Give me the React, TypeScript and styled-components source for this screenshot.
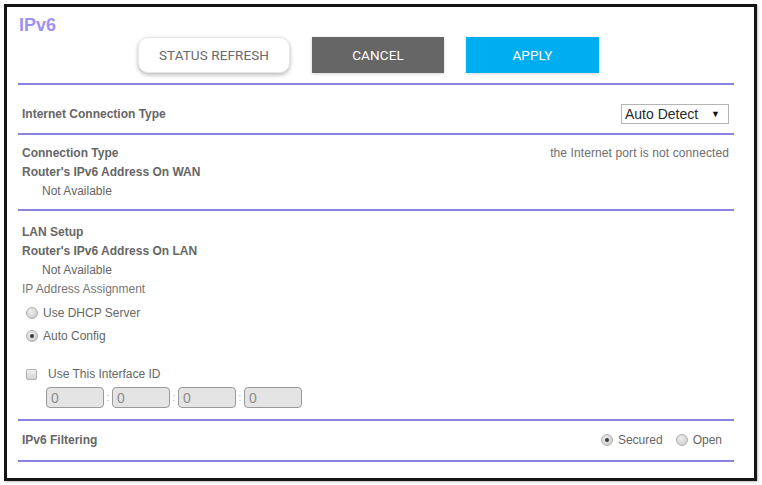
import React from "react";
import styled, { createGlobalStyle } from "styled-components";

const GlobalStyle = createGlobalStyle`
  html, body {
    margin: 0;
    padding: 0;
    background: #ffffff;
  }
  body {
    font-family: "Liberation Sans", Arial, sans-serif;
  }
`;

const Page = styled.div`
  padding: 4px;
  width: 762px;
  height: 485px;
  box-sizing: border-box;
`;

const Frame = styled.div`
  width: 753px;
  height: 477px;
  box-sizing: border-box;
  border: 3px solid #151515;
  padding: 8px 20px 0 11px;
  box-shadow: 1px 1px 2px rgba(0, 0, 0, 0.25);
`;

const Title = styled.div`
  margin-left: 1px;
  font-size: 18px;
  line-height: 20px;
  font-weight: bold;
  color: #9f92ee;
`;

const ButtonRow = styled.div`
  display: flex;
  gap: 22px;
  margin: 2px 0 0 120px;
`;

const Button = styled.div<{ $variant: "plain" | "dark" | "blue"; $width: number }>`
  width: ${(p) => p.$width}px;
  height: 36px;
  display: flex;
  align-items: center;
  justify-content: center;
  font-family: Roboto, "Liberation Sans", sans-serif;
  font-size: 13.5px;
  letter-spacing: 0.1px;
  box-sizing: border-box;
  background: ${(p) =>
    p.$variant === "plain" ? "#ffffff" : p.$variant === "dark" ? "#666666" : "#00adef"};
  color: ${(p) => (p.$variant === "plain" ? "#6a6a6a" : "#ffffff")};
  border-radius: ${(p) => (p.$variant === "plain" ? "10px" : "0")};
  border: ${(p) => (p.$variant === "plain" ? "1px solid #e6e6e6" : "none")};
  box-shadow: ${(p) =>
    p.$variant === "plain"
      ? "0 2px 4px rgba(0, 0, 0, 0.28)"
      : "0 1px 3px rgba(0, 0, 0, 0.18)"};
`;

const Section = styled.div<{ $top: number; $bottom: number }>`
  padding: ${(p) => p.$top}px 0 ${(p) => p.$bottom}px 4px;
  border-bottom: 2px solid #8a82e2;
`;

const HeaderRule = styled.div`
  margin-top: 10px;
  border-bottom: 2px solid #8a82e2;
`;

const Row = styled.div<{ $height?: number }>`
  display: flex;
  align-items: center;
  justify-content: space-between;
  height: ${(p) => p.$height ?? 19}px;
  font-size: 12px;
  color: #666666;
`;

const Label = styled.span<{ $bold?: boolean; $indent?: number; $light?: boolean }>`
  font-weight: ${(p) => (p.$bold ? "bold" : "normal")};
  padding-left: ${(p) => p.$indent ?? 0}px;
  color: ${(p) => (p.$light ? "#777777" : "#666666")};
`;

const Note = styled.span`
  margin-right: 5px;
  color: #6e6e6e;
  letter-spacing: 0.1px;
`;

const Select = styled.div`
  width: 108px;
  height: 20px;
  box-sizing: border-box;
  margin-right: 5px;
  border: 1px solid #b4b4b4;
  background: #ffffff;
  display: flex;
  align-items: center;
  justify-content: space-between;
  padding: 0 8px 0 3px;
  font-size: 14px;
  color: #2a2a2a;
`;

const Arrow = styled.span`
  font-size: 9px;
  color: #111;
`;

const Choice = styled.label<{ $indent?: number }>`
  display: flex;
  align-items: center;
  gap: 5px;
  padding-left: ${(p) => p.$indent ?? 0}px;
  color: #666666;
`;

const Radio = styled.span<{ $on?: boolean }>`
  position: relative;
  width: 10px;
  height: 10px;
  border-radius: 50%;
  border: 1px solid #b0b0b0;
  background: radial-gradient(circle at 40% 35%, #eeeeee, #c6c6c6);
  box-sizing: content-box;
  &::after {
    content: "";
    display: ${(p) => (p.$on ? "block" : "none")};
    position: absolute;
    left: 3px;
    top: 3px;
    width: 4px;
    height: 4px;
    border-radius: 50%;
    background: #3a3a3a;
  }
`;

const Box = styled.span`
  width: 9px;
  height: 9px;
  border: 1px solid #b0b0b0;
  border-radius: 2px;
  background: linear-gradient(#f2f2f2, #d2d2d2);
  margin-right: 6px;
`;

const FieldRow = styled.div`
  display: flex;
  align-items: center;
  margin-top: 3px;
  padding-left: 24px;
`;

const Field = styled.div`
  width: 58px;
  height: 21px;
  box-sizing: border-box;
  border: 1px solid #9a9a9a;
  border-radius: 4px;
  background: #e4e4e4;
  color: #8c8c8c;
  font-size: 14px;
  display: flex;
  align-items: center;
  padding-left: 4px;
`;

const Colon = styled.span`
  width: 8px;
  text-align: center;
  font-size: 10px;
  color: #aaaaaa;
`;

const FilterChoices = styled.div`
  display: flex;
  gap: 13px;
  margin-right: 12px;
`;

export default function App() {
  return (
    <>
      <GlobalStyle />
      <Page>
        <Frame>
          <Title>IPv6</Title>
          <ButtonRow>
            <Button $variant="plain" $width={152}>STATUS REFRESH</Button>
            <Button $variant="dark" $width={132}>CANCEL</Button>
            <Button $variant="blue" $width={133}>APPLY</Button>
          </ButtonRow>
          <HeaderRule />

          <Section $top={19} $bottom={9}>
            <Row $height={20}>
              <Label $bold>Internet Connection Type</Label>
              <Select>
                Auto Detect <Arrow>▼</Arrow>
              </Select>
            </Row>
          </Section>

          <Section $top={8} $bottom={9}>
            <Row>
              <Label $bold>Connection Type</Label>
              <Note>the Internet port is not connected</Note>
            </Row>
            <Row>
              <Label $bold>Router's IPv6 Address On WAN</Label>
            </Row>
            <Row>
              <Label $indent={20}>Not Available</Label>
            </Row>
          </Section>

          <Section $top={11} $bottom={11}>
            <Row>
              <Label $bold>LAN Setup</Label>
            </Row>
            <Row>
              <Label $bold>Router's IPv6 Address On LAN</Label>
            </Row>
            <Row>
              <Label $indent={20}>Not Available</Label>
            </Row>
            <Row>
              <Label $light>IP Address Assignment</Label>
            </Row>
            <Row $height={23} style={{ marginTop: 3 }}>
              <Choice $indent={4}>
                <Radio />
                Use DHCP Server
              </Choice>
            </Row>
            <Row $height={23}>
              <Choice $indent={4}>
                <Radio $on />
                Auto Config
              </Choice>
            </Row>
            <Row $height={20} style={{ marginTop: 17 }}>
              <Choice $indent={4}>
                <Box />
                Use This Interface ID
              </Choice>
            </Row>
            <FieldRow>
              <Field>0</Field>
              <Colon>:</Colon>
              <Field>0</Field>
              <Colon>:</Colon>
              <Field>0</Field>
              <Colon>:</Colon>
              <Field>0</Field>
            </FieldRow>
          </Section>

          <Section $top={9} $bottom={11}>
            <Row>
              <Label $bold>IPv6 Filtering</Label>
              <FilterChoices>
                <Choice>
                  <Radio $on />
                  Secured
                </Choice>
                <Choice>
                  <Radio />
                  Open
                </Choice>
              </FilterChoices>
            </Row>
          </Section>
        </Frame>
      </Page>
    </>
  );
}
